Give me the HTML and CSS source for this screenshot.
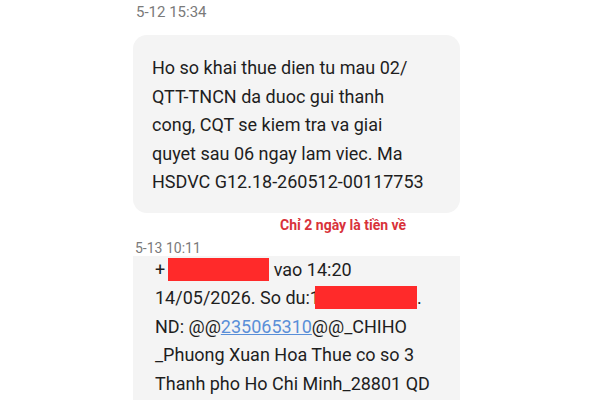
FILE: index.html
```html
<!DOCTYPE html>
<html lang="vi">
<head>
  <meta charset="UTF-8" />
  <meta name="viewport" content="width=device-width, initial-scale=1.0"/>
  <title>Tin nhan</title>
  <link rel="stylesheet" href="styles.css">
</head>
<body>
<div class="thread">
  <div class="stamp">5-12 15:34</div>
  <div class="bubble">
    Ho so khai thue dien tu mau 02/<br>
    QTT-TNCN da duoc gui thanh<br>
    cong, CQT se kiem tra va giai<br>
    quyet sau 06 ngay lam viec. Ma<br>
    HSDVC G12.18-260512-00117753
  </div>
  <div class="note">Chỉ 2 ngày là tiền về</div>

  <div class="stamp stamp-2">5-13 10:11</div>
  <div class="bubble bubble-2">
    +<span class="redact redact-1"></span> vao 14:20<br>
    14/05/2026. So du:1<span class="redact redact-2"></span>.<br>
    ND: @@<a href="#">235065310</a>@@_CHIHO<br>
    _Phuong Xuan Hoa Thue co so 3<br>
    Thanh pho Ho Chi Minh_28801 QD
  </div>
</div>
</body>
</html>
```

FILE: styles.css
```css
body { margin: 0; background: #fff; font-family: Roboto, "Noto Sans", sans-serif; color: #1e1e1e; }
.thread { width: 327px; margin-left: 133px; }
.stamp { font-size: 15px; color: #7a7a7a; padding: 3px 0 0 3px; height: 32px; line-height: 18px; }
.stamp-2 { font-size: 14px; padding: 0 0 0 2px; height: 17px; }
.bubble { background: #f4f4f4; border-radius: 14px; padding: 19px 10px 16px 19px; font-size: 18px; line-height: 28.5px; }
.bubble-2 { border-radius: 0; padding: 0 10px 0 22px; height: 160px; }
.note { color: #d8323a; font-weight: bold; font-size: 14px; padding: 2px 0 0 147px; height: 24px; line-height: 20px; }
.bubble a { color: #5a8fd8; }
.redact { display: inline-block; background: #ff2a2a; height: 23px; vertical-align: -5px; }
.redact-1 { width: 101px; margin-left: 3px; }
.redact-2 { width: 102px; margin-left: -5px; }
```
